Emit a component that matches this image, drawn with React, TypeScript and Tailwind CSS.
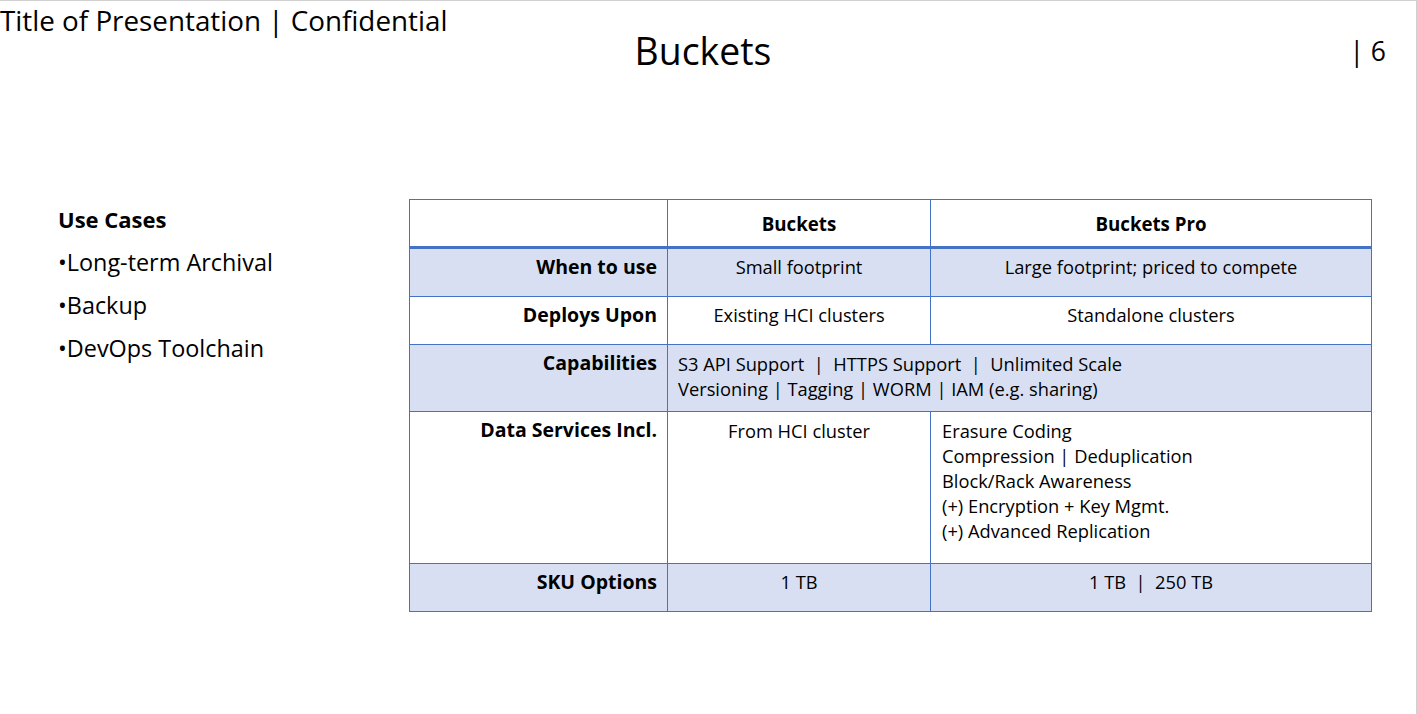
const font = { fontFamily: "'Open Sans', Lato, sans-serif" };

const rows = [
  { label: "When to use", a: "Small footprint", b: "Large footprint; priced to compete", band: true, h: "h-[49px]" },
  { label: "Deploys Upon", a: "Existing HCI clusters", b: "Standalone clusters", band: false, h: "h-[48px]" },
];

const cell = "border border-[#4472c4]";
const labelCell = "border border-[#4472c4] text-right font-bold align-top pr-[10px] pt-[5px] text-[19.5px]";

export default function App() {
  return (
    <div
      className="w-[1417px] h-[714px] bg-white border-t border-r border-[#d0d0d0] text-black overflow-hidden"
      style={font}
    >
      <div className="text-[27.8px] leading-[34px] pt-[2px]">Title of Presentation | Confidential</div>
      <div className="grid grid-cols-[1fr_auto_1fr] -mt-[6px]">
        <div />
        <div className="text-[37.4px] leading-[40px] -translate-x-[5px]">Buckets</div>
        <div className="text-right text-[26.5px] leading-[40px] pr-[30px]">| 6</div>
      </div>

      <div className="flex mt-[128px]">
        <div className="w-[409px] pl-[58px] pt-[6px]">
          <div className="font-bold text-[22px] leading-[28px]">Use Cases</div>
          <ul className="text-[23.4px] leading-[43px] mt-[8px]">
            <li>•Long-term Archival</li>
            <li>•Backup</li>
            <li>•DevOps Toolchain</li>
          </ul>
        </div>

        <table className="border-collapse w-[962px] table-fixed text-[18.3px] leading-[25px] self-start">
          <colgroup>
            <col className="w-[258px]" />
            <col className="w-[263px]" />
            <col className="w-[441px]" />
          </colgroup>
          <thead>
            <tr className="h-[48px]">
              <th className="border border-b-[3px] border-[#4472c4]" />
              <th className="border border-b-[3px] border-[#4472c4] font-bold text-[18.7px] text-center align-middle">Buckets</th>
              <th className="border border-b-[3px] border-[#4472c4] font-bold text-[18.7px] text-center align-middle">Buckets Pro</th>
            </tr>
          </thead>
          <tbody>
            {rows.map((r) => (
              <tr key={r.label} className={`${r.h} ${r.band ? "bg-[#d9dff2]" : "bg-white"}`}>
                <td className={labelCell}>{r.label}</td>
                <td className={`${cell} text-center align-top pt-[5px]`}>{r.a}</td>
                <td className={`${cell} text-center align-top pt-[5px]`}>{r.b}</td>
              </tr>
            ))}
            <tr className="h-[67px] bg-[#d9dff2]">
              <td className={labelCell}>Capabilities</td>
              <td colSpan={2} className={`${cell} align-top pl-[10px] pt-[6px] whitespace-pre`}>
                <div>S3 API Support  |  HTTPS Support  |  Unlimited Scale</div>
                <div>Versioning | Tagging | WORM | IAM (e.g. sharing)</div>
              </td>
            </tr>
            <tr className="h-[152px] bg-white">
              <td className={labelCell}>Data Services Incl.</td>
              <td className={`${cell} text-center align-top pt-[6px]`}>From HCI cluster</td>
              <td className={`${cell} align-top pl-[11px] pt-[6px]`}>
                <div>Erasure Coding</div>
                <div>Compression | Deduplication</div>
                <div>Block/Rack Awareness</div>
                <div>(+) Encryption + Key Mgmt.</div>
                <div>(+) Advanced Replication</div>
              </td>
            </tr>
            <tr className="h-[48px] bg-[#d9dff2]">
              <td className={labelCell}>SKU Options</td>
              <td className={`${cell} text-center align-top pt-[5px]`}>1 TB</td>
              <td className={`${cell} text-center align-top pt-[5px] whitespace-pre`}>1 TB  |  250 TB</td>
            </tr>
          </tbody>
        </table>
      </div>
    </div>
  );
}
